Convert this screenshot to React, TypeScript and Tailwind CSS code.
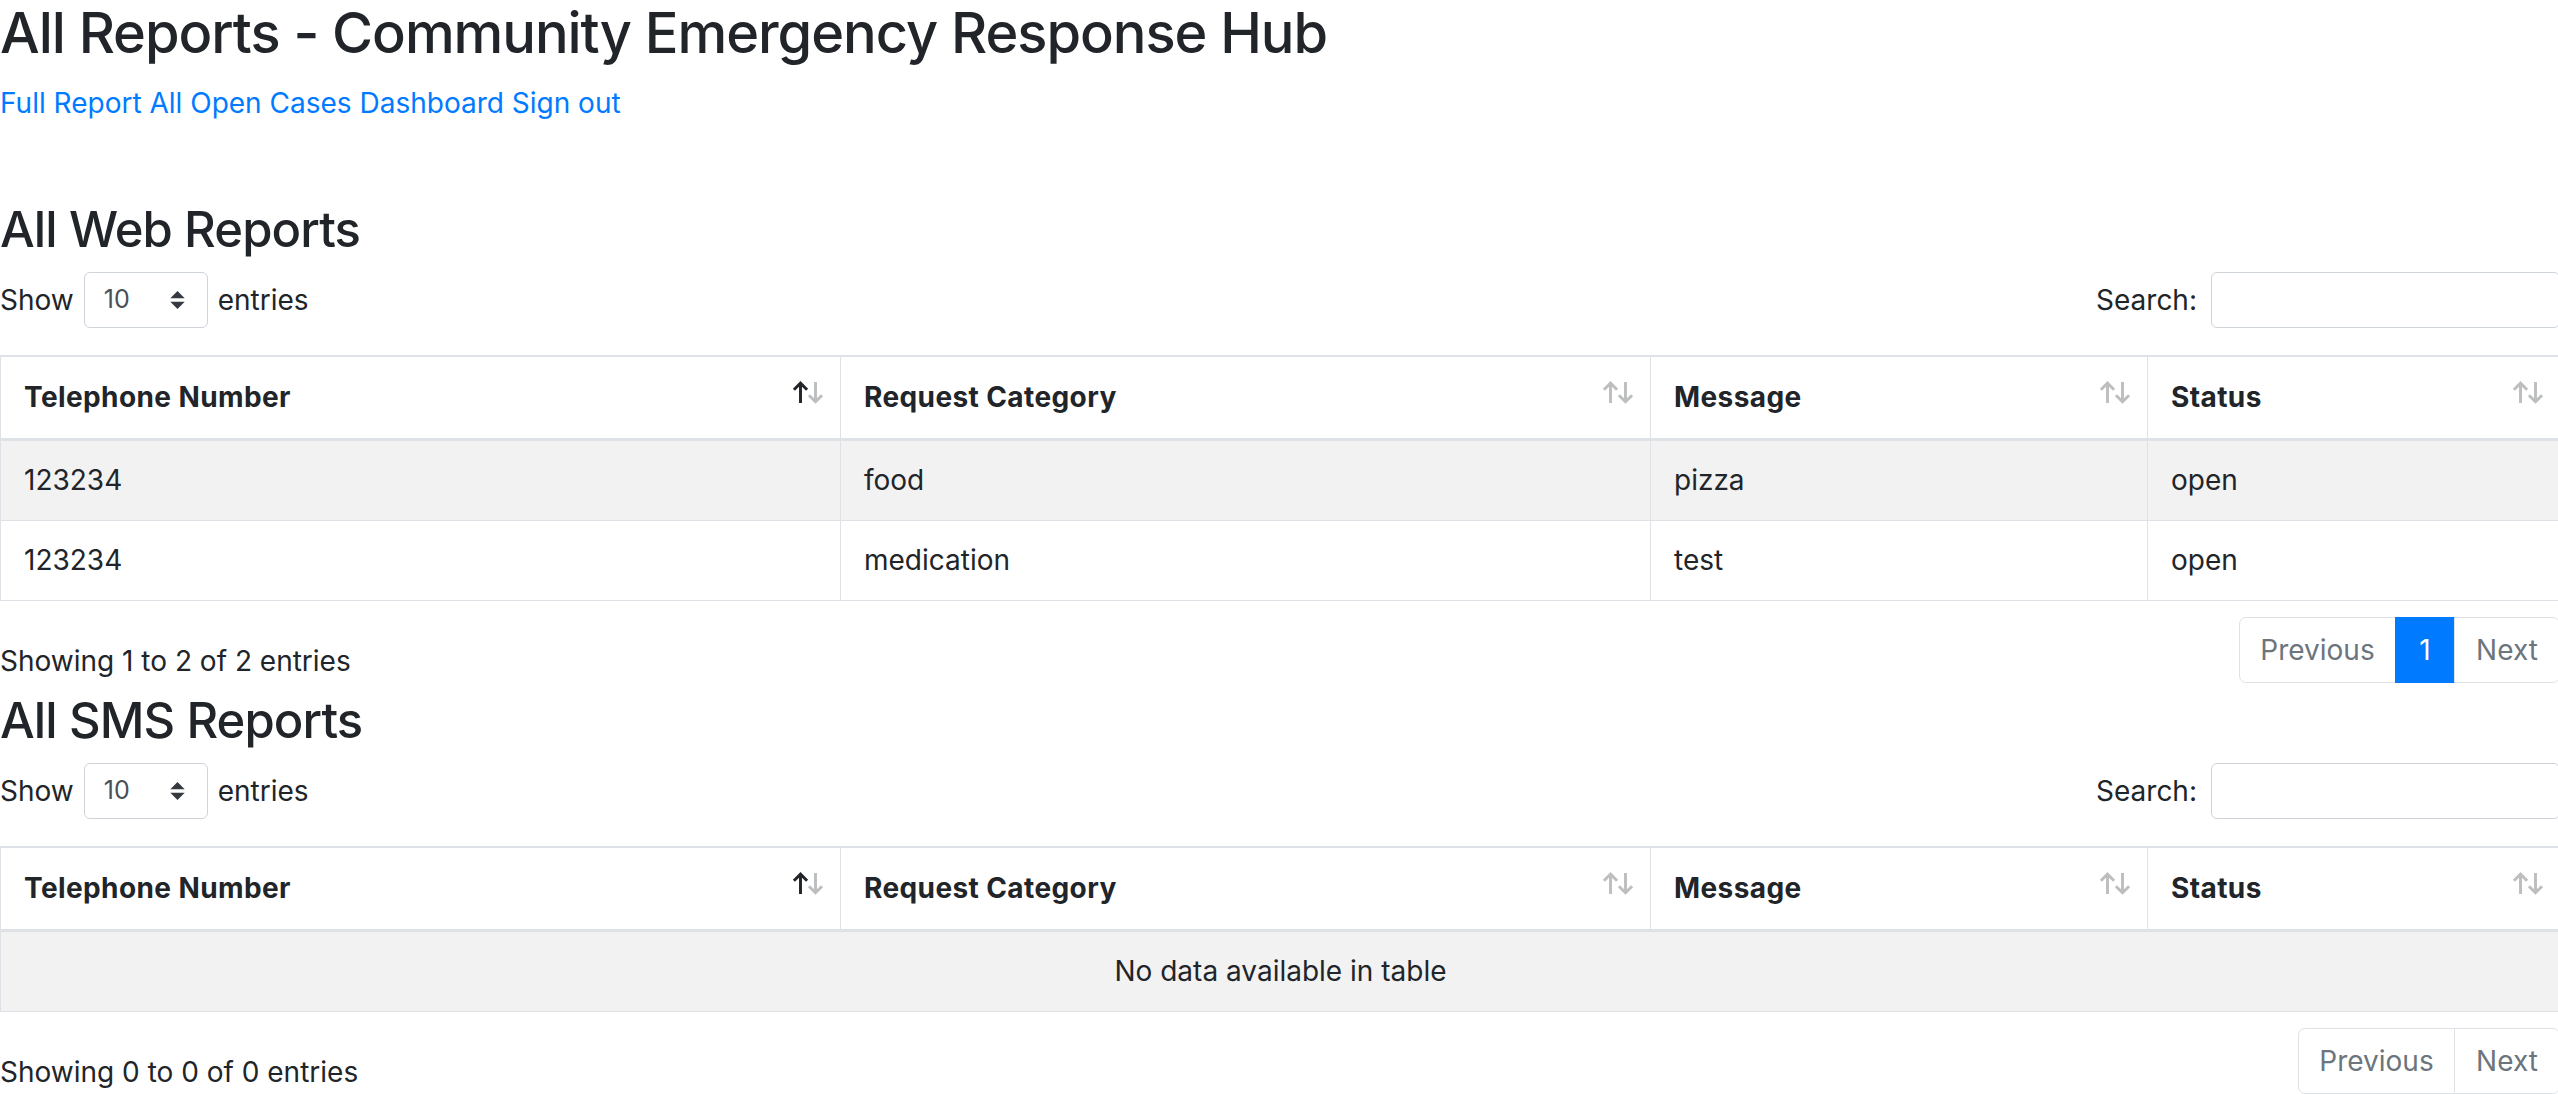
const COLS = ["Telephone Number", "Request Category", "Message", "Status"];
const WIDTHS = ["w-[840px]", "w-[810px]", "w-[497px]", "w-[413px]"];

const WEB_ROWS = [
  ["123234", "food", "pizza", "open"],
  ["123234", "medication", "test", "open"],
];

function Arrow({ down, dark }: { down?: boolean; dark?: boolean }) {
  return (
    <svg
      width="17"
      height="23"
      viewBox="0 0 16 22"
      fill="none"
      stroke={dark ? "#212529" : "#bdbebf"}
      strokeWidth="2.8"
    >
      {down ? (
        <path d="M8 1v19M1.7 13.6 8 19.9l6.3-6.3" />
      ) : (
        <path d="M8 21V2M1.7 8.3 8 2l6.3 6.3" />
      )}
    </svg>
  );
}

function SortArrows({ active }: { active?: boolean }) {
  return (
    <span className="absolute right-[16px] top-[24px] flex">
      <Arrow dark={active} />
      <span className="-ml-[2px]">
        <Arrow down />
      </span>
    </span>
  );
}

function Pagination({ pages }: { pages: number[] }) {
  return (
    <ul className="flex h-[66px]">
      <li className="flex w-[157px] items-center justify-center rounded-l-[7px] border border-[#dee2e6] text-[#6c757d]">
        Previous
      </li>
      {pages.map((p) => (
        <li
          key={p}
          className="-ml-px flex w-[60px] items-center justify-center border border-[#007bff] bg-[#007bff] text-white"
        >
          {p}
        </li>
      ))}
      <li className="-ml-px flex w-[106px] items-center justify-center rounded-r-[7px] border border-[#dee2e6] text-[#6c757d]">
        Next
      </li>
    </ul>
  );
}

function ReportSection({
  title,
  rows,
  info,
  pages,
}: {
  title: string;
  rows: string[][];
  info: string;
  pages: number[];
}) {
  return (
    <section className="mb-[8px]">
      <h2 className="mb-[13px] text-[49px] leading-[59px] font-medium tracking-[-0.9px]">{title}</h2>

      <div className="mb-[27px] flex h-[56px] items-center justify-between">
        <div className="flex items-center">
          <span>Show</span>
          <div className="mx-[10px] flex h-[56px] w-[124px] items-center justify-between rounded-[6px] border border-[#ced4da] pr-[22px] pl-[19px] text-[25px] text-[#495057]">
            <span>10</span>
            <svg width="15" height="18" viewBox="0 0 4 5">
              <path fill="#343a40" d="M2 0L0 2h4zm0 5L0 3h4z" />
            </svg>
          </div>
          <span>entries</span>
        </div>
        <div className="flex items-center">
          <span>Search:</span>
          <input
            type="search"
            className="ml-[14px] h-[56px] w-[349px] rounded-[6px] border border-[#ced4da] outline-none"
          />
        </div>
      </div>

      <table className="w-[2560px] table-fixed border-separate border-spacing-0 border-l border-[#dee2e6]">
        <colgroup>
          {WIDTHS.map((w, i) => (
            <col key={i} className={w} />
          ))}
        </colgroup>
        <thead>
          <tr>
            {COLS.map((c, i) => (
              <th
                key={c}
                className="relative border-t-2 border-r border-b-[3px] border-[#dee2e6] px-[23px] py-[20px] text-left leading-[41px] font-bold tracking-[0.4px]"
              >
                {c}
                <SortArrows active={i === 0} />
              </th>
            ))}
          </tr>
        </thead>
        <tbody>
          {rows.length === 0 ? (
            <tr className="bg-[#f2f2f2]">
              <td
                colSpan={4}
                className="border-r border-b border-[#dee2e6] py-[19px] text-center leading-[41px]"
              >
                No data available in table
              </td>
            </tr>
          ) : (
            rows.map((r, i) => (
              <tr key={i} className={i % 2 === 0 ? "bg-[#f2f2f2]" : "bg-white"}>
                {r.map((cell, j) => (
                  <td
                    key={j}
                    className="border-r border-b border-[#dee2e6] px-[23px] py-[19px] leading-[41px]"
                  >
                    {cell}
                  </td>
                ))}
              </tr>
            ))
          )}
        </tbody>
      </table>

      <div className="mt-[16px] flex items-start justify-between">
        <div className="pt-[23px]">{info}</div>
        <Pagination pages={pages} />
      </div>
    </section>
  );
}

export default function App() {
  return (
    <div className="h-screen w-full overflow-hidden bg-white font-[Inter,'Noto_Sans',sans-serif] text-[28px] leading-[1.5] text-[#212529]">
      <div className="w-[2560px]">
        <h1 className="mb-[15px] text-[56px] leading-[1.2] font-medium tracking-[-1.05px]">
          All Reports - Community Emergency Response Hub
        </h1>
        <div className="text-[#007bff]">
          <a href="#">Full Report</a> <a href="#">All Open Cases</a>{" "}
          <a href="#">Dashboard</a> <a href="#">Sign out</a>
        </div>

        <div className="mt-[76px]">
          <ReportSection
            title="All Web Reports"
            rows={WEB_ROWS}
            info="Showing 1 to 2 of 2 entries"
            pages={[1]}
          />
          <ReportSection
            title="All SMS Reports"
            rows={[]}
            info="Showing 0 to 0 of 0 entries"
            pages={[]}
          />
        </div>
      </div>
    </div>
  );
}
